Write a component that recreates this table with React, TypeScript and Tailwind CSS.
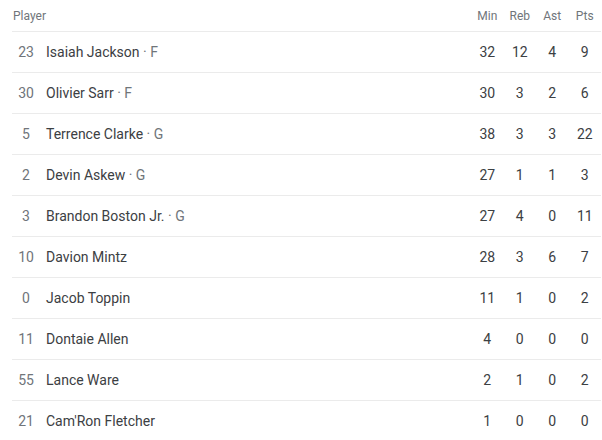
const players = [
  { num: 23, name: 'Isaiah Jackson', pos: 'F', min: 32, reb: 12, ast: 4, pts: 9 },
  { num: 30, name: 'Olivier Sarr', pos: 'F', min: 30, reb: 3, ast: 2, pts: 6 },
  { num: 5, name: 'Terrence Clarke', pos: 'G', min: 38, reb: 3, ast: 3, pts: 22 },
  { num: 2, name: 'Devin Askew', pos: 'G', min: 27, reb: 1, ast: 1, pts: 3 },
  { num: 3, name: 'Brandon Boston Jr.', pos: 'G', min: 27, reb: 4, ast: 0, pts: 11 },
  { num: 10, name: 'Davion Mintz', pos: '', min: 28, reb: 3, ast: 6, pts: 7 },
  { num: 0, name: 'Jacob Toppin', pos: '', min: 11, reb: 1, ast: 0, pts: 2 },
  { num: 11, name: 'Dontaie Allen', pos: '', min: 4, reb: 0, ast: 0, pts: 0 },
  { num: 55, name: 'Lance Ware', pos: '', min: 2, reb: 1, ast: 0, pts: 2 },
  { num: 21, name: "Cam'Ron Fletcher", pos: '', min: 1, reb: 0, ast: 0, pts: 0 },
];

const cols = 'grid grid-cols-[34px_1fr_32.5px_32.5px_32.5px_32.5px] items-center';

export default function App() {
  return (
    <div className="w-[602px] h-[440px] bg-white overflow-hidden pl-3 pr-[1px] font-['Roboto',sans-serif]">
      <div className={`${cols} h-[31px] text-[12px] text-[#70757a]`}>
        <div className="col-span-2 pl-px">Player</div>
        <div className="text-center">Min</div>
        <div className="text-center">Reb</div>
        <div className="text-center">Ast</div>
        <div className="text-center">Pts</div>
      </div>
      {players.map((p) => (
        <div
          key={p.num}
          className={`${cols} h-[41px] border-t border-[#ebebeb] text-[14px] text-[#3c4043]`}
        >
          <div className="text-center pr-[6px] text-[#70757a]">{p.num}</div>
          <div>
            {p.name}
            {p.pos && <span className="text-[#70757a]"> · {p.pos}</span>}
          </div>
          <div className="text-center">{p.min}</div>
          <div className="text-center">{p.reb}</div>
          <div className="text-center">{p.ast}</div>
          <div className="text-center">{p.pts}</div>
        </div>
      ))}
    </div>
  );
}
